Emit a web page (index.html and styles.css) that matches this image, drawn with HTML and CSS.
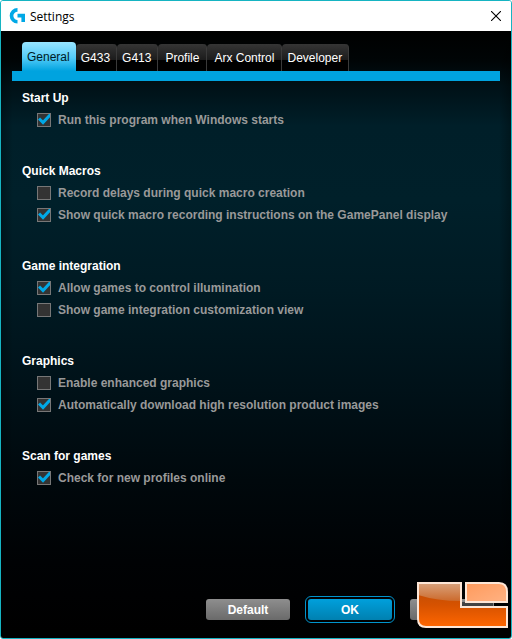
FILE: index.html
```html
<!DOCTYPE html>
<html lang="en">
<head>
  <meta charset="UTF-8">
  <meta name="viewport" content="width=device-width, initial-scale=1.0">
  <title>Settings</title>
  <link rel="stylesheet" href="styles.css">
</head>
<body>
  <div class="window">
    <header class="titlebar">
      <svg class="logo" viewBox="0 0 16 16" aria-hidden="true">
        <path d="M8.5 0A7.6 7.6 0 0 0 8.5 15.6V12A4.1 4.1 0 0 1 8.5 3.7Z" fill="#00a8e6"/>
        <path d="M8.5 5.8H16V14H12.4V9.6H8.5Z" fill="#00a8e6"/>
      </svg>
      <h1>Settings</h1>
      <button class="close" type="button" aria-label="Close">
        <svg viewBox="0 0 10 10"><path d="M0 0L10 10M10 0L0 10" stroke="#000" stroke-width="1.1"/></svg>
      </button>
    </header>

    <main class="content">
      <nav class="tabs">
        <button class="tab active" type="button">General</button>
        <button class="tab" type="button">G433</button>
        <button class="tab" type="button">G413</button>
        <button class="tab wide" type="button">Profile</button>
        <button class="tab wide" type="button">Arx Control</button>
        <button class="tab" type="button">Developer</button>
      </nav>

      <form class="settings">
        <section>
          <h2>Start Up</h2>
          <label><input type="checkbox" checked> Run this program when Windows starts</label>
        </section>
        <section>
          <h2>Quick Macros</h2>
          <label><input type="checkbox"> Record delays during quick macro creation</label>
          <label><input type="checkbox" checked> Show quick macro recording instructions on the GamePanel display</label>
        </section>
        <section>
          <h2>Game integration</h2>
          <label><input type="checkbox" checked> Allow games to control illumination</label>
          <label><input type="checkbox"> Show game integration customization view</label>
        </section>
        <section>
          <h2>Graphics</h2>
          <label><input type="checkbox"> Enable enhanced graphics</label>
          <label><input type="checkbox" checked> Automatically download high resolution product images</label>
        </section>
        <section>
          <h2>Scan for games</h2>
          <label><input type="checkbox" checked> Check for new profiles online</label>
        </section>
      </form>

      <footer class="actions">
        <button class="btn" type="button">Default</button>
        <button class="btn primary" type="button">OK</button>
        <button class="btn" type="button" aria-label="Cancel"></button>
      </footer>
    </main>

    <svg class="watermark" viewBox="0 0 91 46" aria-hidden="true">
      <defs>
        <linearGradient id="orange" x1="0" y1="0" x2="0" y2="1">
          <stop offset="0" stop-color="#b84a08"/>
          <stop offset="0.5" stop-color="#d65200"/>
          <stop offset="1" stop-color="#ff6600"/>
        </linearGradient>
        <linearGradient id="gloss" x1="0" y1="0" x2="0" y2="1">
          <stop offset="0" stop-color="#d9a27c"/>
          <stop offset="1" stop-color="#cc6a2c"/>
        </linearGradient>
        <linearGradient id="peach" x1="0" y1="0" x2="1" y2="1">
          <stop offset="0" stop-color="#ff9a5c"/>
          <stop offset="1" stop-color="#ffb283"/>
        </linearGradient>
      </defs>
      <path d="M42 20H76V28H42Z" fill="#000" opacity="0.5"/>
      <path d="M1 1H44V25H90V45H9Q1 45 1 37Z" fill="url(#orange)"/>
      <path d="M1 1H44V19Q20 19 1 13Z" fill="url(#gloss)"/>
      <path d="M1 1H44V25H90V45H9Q1 45 1 37Z" fill="none" stroke="#fde6d6" stroke-width="2"/>
      <path d="M49 1H82Q90 1 90 10V20H49Z" fill="url(#peach)" stroke="#fde6d6" stroke-width="2"/>
    </svg>
  </div>
</body>
</html>
```
FILE: styles.css
```css
* { box-sizing: border-box; }
body { margin: 0; background: #fff; font: 12px "Liberation Sans", Arial, sans-serif; }
button { font: inherit; border: 0; cursor: pointer; }

.window { position: relative; display: flex; flex-direction: column; min-height: 100vh; border: 1px solid #16b4c2; border-radius: 3px; overflow: hidden; }

.titlebar { display: flex; align-items: center; height: 30px; padding: 0 10px 0 8px; background: #fff; }
.titlebar h1 { flex: 1; margin: 0 0 0 5px; font: 12px "Open Sans", "Noto Sans", sans-serif; color: #000; }
.logo { width: 16px; height: 16px; }
.close { display: flex; padding: 0; background: none; }
.close svg { width: 10px; height: 10px; }

.content {
  flex: 1; display: flex; flex-direction: column; padding: 11px 11px 18px;
  background:
    linear-gradient(90deg, rgba(0,0,0,.3), transparent 12px, transparent calc(100% - 12px), rgba(0,0,0,.3)),
    linear-gradient(#000 0, #000506 30px, #001117 55px, #001f29 95px, #00202a 170px, #001a23 260px, #001118 360px, #00080c 450px, #000204 530px, #000 600px);
}

.tabs { display: flex; align-items: flex-end; padding-left: 10px; border-bottom: 10px solid #00a3df; }
.tab { height: 27px; padding: 0 6px 0 5px; border-right: 1px solid #3a3a3a; border-radius: 4px 4px 0 0; background: linear-gradient(#353535, #1c1c1c 58%, #000 60%); color: #fff; }
.tab.wide { padding: 0 7px; }
.tab.active { height: 29px; border-right: 0; background: linear-gradient(#98e4ff, #52cbf8 55%, #00a3df); color: #001a26; }

.settings { display: flex; flex-direction: column; gap: 29px; padding: 6px 10px; font-weight: bold; line-height: 22px; }
.settings h2 { margin: 0; font-size: 12px; color: #fff; }
.settings label { display: flex; align-items: center; gap: 7px; padding-left: 15px; color: #999; }
.settings input { appearance: none; flex: none; width: 14px; height: 14px; margin: 0; border: 1px solid #777; background: #333; }
.settings input:checked { background: #333 url("data:image/svg+xml,%3Csvg xmlns='http://www.w3.org/2000/svg' viewBox='0 0 14 14'%3E%3Cpath d='M2 5.5L6 9.5L13.5 1.5' fill='none' stroke='%2300a8e6' stroke-width='3'/%3E%3C/svg%3E") center / 14px border-box; }

.actions { display: flex; justify-content: flex-end; align-items: center; gap: 18px; margin-top: auto; padding-right: 6px; }
.btn { width: 84px; height: 21px; padding: 0; border-radius: 3px; background: linear-gradient(#8e8e8e, #6a6a6a); color: #fff; font-weight: bold; }
.btn.primary { background: linear-gradient(#00a0dc, #0080b0); outline: 1px solid #0094cc; outline-offset: 2px; }

.watermark { position: absolute; right: 3px; bottom: 10px; width: 91px; height: 46px; }
```
